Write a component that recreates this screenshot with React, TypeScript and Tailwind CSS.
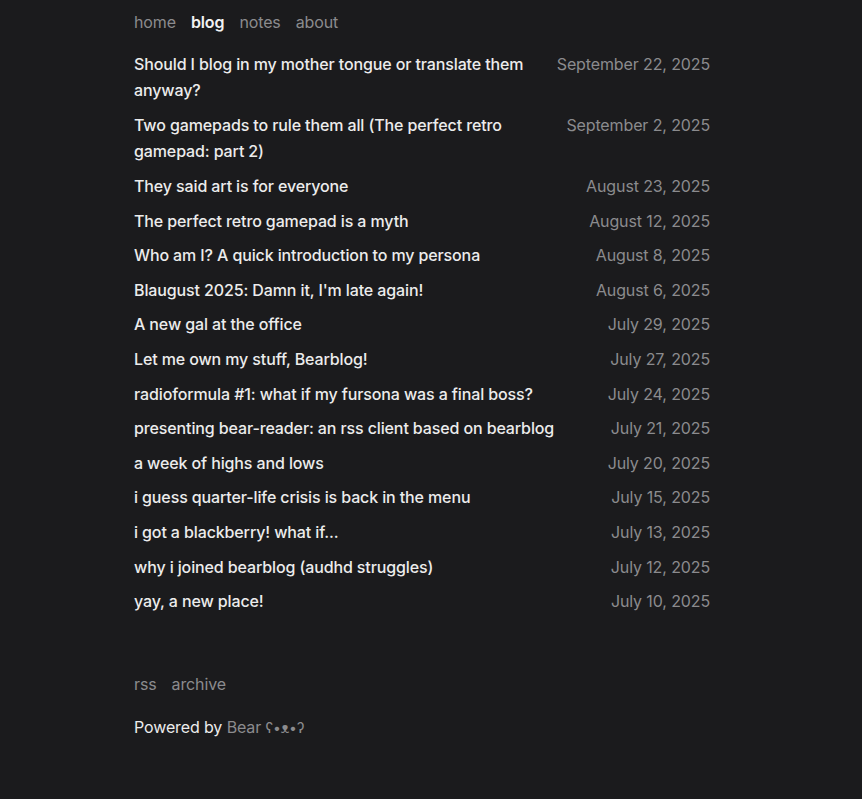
const posts: [string, string][] = [
  ["Should I blog in my mother tongue or translate them anyway?", "September 22, 2025"],
  ["Two gamepads to rule them all (The perfect retro gamepad: part 2)", "September 2, 2025"],
  ["They said art is for everyone", "August 23, 2025"],
  ["The perfect retro gamepad is a myth", "August 12, 2025"],
  ["Who am I? A quick introduction to my persona", "August 8, 2025"],
  ["Blaugust 2025: Damn it, I'm late again!", "August 6, 2025"],
  ["A new gal at the office", "July 29, 2025"],
  ["Let me own my stuff, Bearblog!", "July 27, 2025"],
  ["radioformula #1: what if my fursona was a final boss?", "July 24, 2025"],
  ["presenting bear-reader: an rss client based on bearblog", "July 21, 2025"],
  ["a week of highs and lows", "July 20, 2025"],
  ["i guess quarter-life crisis is back in the menu", "July 15, 2025"],
  ["i got a blackberry! what if...", "July 13, 2025"],
  ["why i joined bearblog (audhd struggles)", "July 12, 2025"],
  ["yay, a new place!", "July 10, 2025"],
];

export default function App() {
  return (
    <div className="min-h-[799px] bg-[#1b1b1d] font-['Inter',sans-serif] text-[16px] tracking-[-0.12px] text-[#ececec]">
      <div className="ml-[134px] w-[576px] pt-[9px]">
        <nav className="flex gap-[15px] leading-[27px] text-[#8b8b8e]">
          <a href="#">home</a>
          <a href="#" className="font-semibold text-[#f2f2f2]">blog</a>
          <a href="#">notes</a>
          <a href="#">about</a>
        </nav>

        <ul className="mt-[15px] flex flex-col gap-[8.2px]">
          {posts.map(([title, date]) => (
            <li key={title} className="flex justify-between gap-[6px] leading-[26.4px]">
              <a href="#" className="min-w-0 font-medium">{title}</a>
              <span className="shrink-0 text-[#8b8b8e]">{date}</span>
            </li>
          ))}
        </ul>

        <footer className="mt-[56px]">
          <div className="flex gap-[15px] leading-[27px] text-[#8b8b8e]">
            <a href="#">rss</a>
            <a href="#">archive</a>
          </div>
          <p className="mt-[16px] leading-[27px]">
            Powered by <a href="#" className="text-[#8b8b8e]">Bear <span className="text-[14px]">ʕ•ᴥ•ʔ</span></a>
          </p>
        </footer>
      </div>
    </div>
  );
}
